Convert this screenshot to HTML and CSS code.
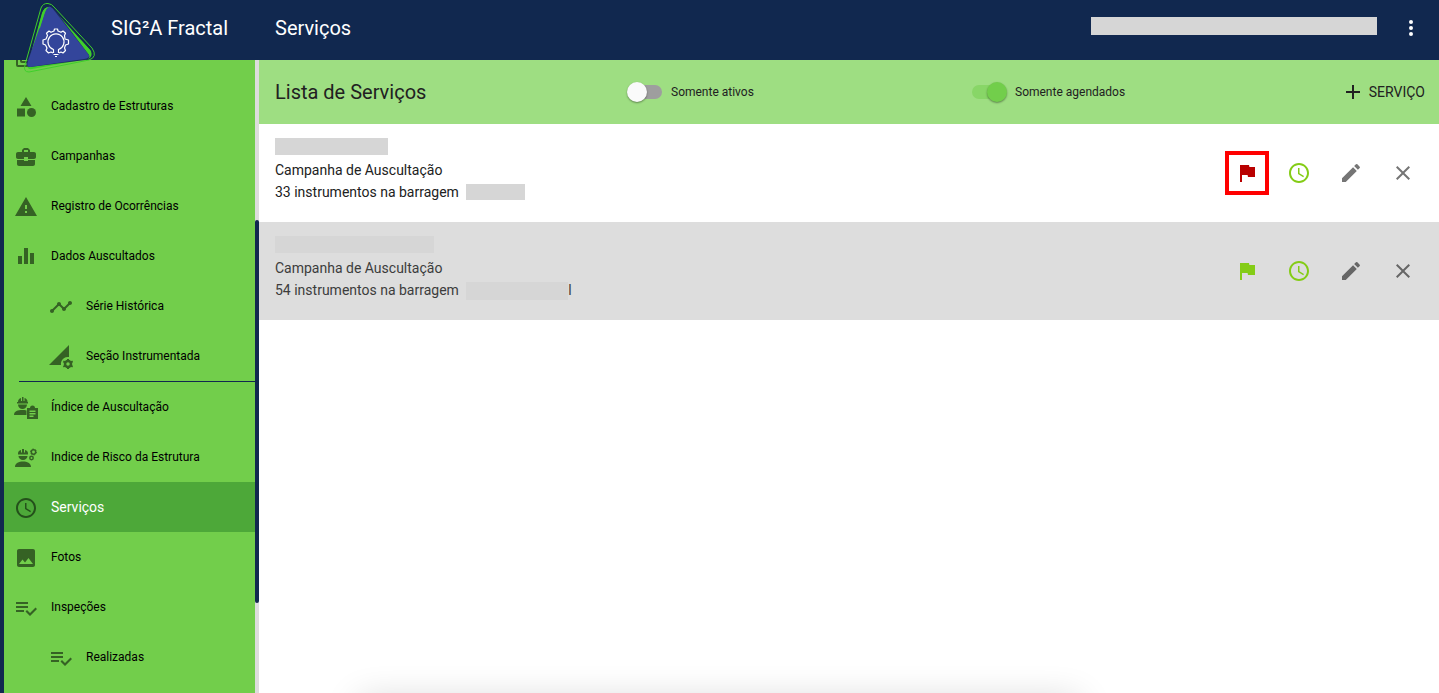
FILE: index.html
```
<!doctype html>
<html lang="pt-BR">
  <head>
    <meta charset="utf-8">
    <title>SIG²A Fractal - Serviços</title>
    <meta name="viewport" content="width=device-width">
    <link rel="stylesheet" href="styles.css">
  </head>
  <body>

    <svg class="sprite" aria-hidden="true">
      <symbol id="flag" viewBox="0 0 24 24"><path d="M14.400 6L14 4H5v17h2v-7h5.600l.4 2h7V6z"/></symbol>
      <symbol id="clock" viewBox="0 0 24 24"><path d="M11.990 2C6.470 2 2 6.480 2 12s4.470 10 9.990 10C17.520 22 22 17.520 22 12S17.520 2 11.990 2zM12 20c-4.420 0-8-3.580-8-8s3.580-8 8-8 8 3.580 8 8-3.580 8-8 8zm.5-13H11v6l5.250 3.150.75-1.230-4.500-2.670z"/></symbol>
      <symbol id="pencil" viewBox="0 0 24 24"><path d="M3 17.250V21h3.750L17.810 9.940l-3.750-3.750L3 17.250zM20.710 7.040c.39-.39.39-1.020 0-1.410l-2.340-2.340a1 1 0 0 0-1.410 0l-1.830 1.830 3.750 3.750 1.830-1.830z"/></symbol>
      <symbol id="close" viewBox="0 0 24 24"><path d="M19 6.410L17.590 5 12 10.590 6.410 5 5 6.410 10.590 12 5 17.590 6.410 19 12 13.410 17.590 19 19 17.590 13.410 12z"/></symbol>
      <symbol id="playlist" viewBox="0 0 24 24"><path d="M14 10H2v2h12v-2zm0-4H2v2h12V6zM2 16h8v-2H2v2zm19.500-4.500L23 13l-6.990 7-4.510-4.500L13 14l3.010 3 5.490-5.500z"/></symbol>
    </svg>

    <header class="topbar">
      <a href="#" class="logo" aria-label="SIG²A">
        <svg viewBox="0 0 76 76">
          <path d="M21 8Q23 3 28 3.500Q32 4 34 7L72 48Q78 57 69 60L9 72Q3 72 5 65Z" fill="none" stroke="#3fce2b"/>
          <path d="M22 13Q24 7 29 7L33 9L71 51Q73 57 68 59L12 69Q6 70 8 64Z" fill="#3fce2b"/>
          <path d="M27 10Q30 6 35 10L69 55Q71 59 65 60L10 67Q5 67 7 61L25 20Z" fill="#1b2b61"/>
          <path d="M26 9Q29 4 33 9L69 55Q70 58 64 59L10 67Q6 67 8 61Z" fill="#33459b"/>
          <path d="M22 14Q24 7 29 7Q26 8 24 15L20 28L18 29ZM60 39L70 50Q72 54 70 55Z" fill="#3fce2b"/>
          <g fill="none" stroke="#fff" stroke-width="1.200" stroke-linejoin="round">
            <path d="M33 53l-2-1-2.500 1-2.500-2.500 1-2.500-1.500-3-2.500-1v-4l3-1 1.500-3.500-1-2.300 2.500-2.200 2 1.300 3-1.300.5-2h3l.5 2 3 1.300 2-1.300 2.500 2.200-1 2.300L45 39l3.500 1v4l-3 1-1 3 1 2.500-2.500 2.500-2-1-2 1"/>
            <path d="M33.500 53v-3.500a8 8 0 1 1 5 0V53M33.500 54.500h5M35 56.500h2"/>
          </g>
        </svg>
      </a>
      <span class="brand">SIG²A Fractal</span>
      <h1 class="page-title">Serviços</h1>
      <span class="user"></span>
      <button class="more" aria-label="Mais opções">
        <svg class="icon" viewBox="0 0 24 24"><path d="M12 8a2 2 0 1 0 0-4 2 2 0 0 0 0 4zm0 2a2 2 0 1 0 0 4 2 2 0 0 0 0-4zm0 6a2 2 0 1 0 0 4 2 2 0 0 0 0-4z"/></svg>
      </button>
    </header>

    <div class="layout">
      <nav class="sidebar">
        <div class="menu">
          <a href="#" class="item" aria-label="Painel">
            <svg class="icon" viewBox="0 0 24 24"><path d="M4 6H2v14a2 2 0 0 0 2 2h14v-2H4zM20 2H8a2 2 0 0 0-2 2v12a2 2 0 0 0 2 2h12a2 2 0 0 0 2-2V4a2 2 0 0 0-2-2zm0 14H8V4h12z"/></svg>
          </a>
          <a href="#" class="item">
            <svg class="icon" viewBox="0 0 24 24"><path d="M12 2l-5.500 9h11zM3 13.500h8v8H3z"/><circle cx="17.500" cy="17.500" r="4.500"/></svg>
            Cadastro de Estruturas
          </a>
          <a href="#" class="item">
            <svg class="icon" viewBox="0 0 24 24"><path d="M10 16v-1H3.010L3 19c0 1.110.89 2 2 2h14c1.110 0 2-.89 2-2v-4h-7v1h-4zm10-9h-4.010V5l-2-2h-4l-2 2v2H4c-1.100 0-2 .9-2 2v3c0 1.110.89 2 2 2h6v-2h4v2h6c1.100 0 2-.9 2-2V9c0-1.100-.9-2-2-2zm-6 0h-4V5h4v2z"/></svg>
            Campanhas
          </a>
          <a href="#" class="item">
            <svg class="icon" viewBox="0 0 24 24"><path d="M1 21h22L12 2 1 21zm12-3h-2v-2h2v2zm0-4h-2v-4h2v4z"/></svg>
            Registro de Ocorrências
          </a>
          <a href="#" class="item">
            <svg class="icon" viewBox="0 0 24 24"><path d="M4 11h4v8H4zM10 3h4v16h-4zM16 8h4v11h-4z"/></svg>
            Dados Auscultados
          </a>
          <a href="#" class="item sub">
            <svg class="icon" viewBox="0 0 24 24"><path d="M23 8c0 1.100-.9 2-2 2-.18 0-.35-.02-.51-.07l-3.560 3.550c.05.16.07.34.07.52 0 1.100-.9 2-2 2s-2-.9-2-2c0-.18.02-.36.07-.52l-2.550-2.550c-.16.05-.34.07-.52.07s-.36-.02-.52-.07l-4.550 4.560c.05.16.07.33.07.51 0 1.100-.9 2-2 2s-2-.9-2-2 .9-2 2-2c.18 0 .35.02.51.07l4.560-4.550C8.020 9.360 8 9.180 8 9c0-1.100.9-2 2-2s2 .9 2 2c0 .18-.02.36-.07.52l2.550 2.550c.16-.05.34-.07.52-.07s.36.02.52.07l3.550-3.560C19.020 8.350 19 8.180 19 8c0-1.100.9-2 2-2s2 .9 2 2z"/></svg>
            Série Histórica
          </a>
          <a href="#" class="item sub">
            <svg class="icon" viewBox="0 0 24 24"><path d="M0 20L20 0v12a7 7 0 0 0-8 8z"/><circle cx="19" cy="19" r="3" fill="none" stroke="currentColor" stroke-width="2.500"/><path d="M18 14h2v2h-2zM18 22h2v2h-2zM13.800 17.200l1-1.700 1.700 1-1 1.700zM21.500 21.600l1-1.700 1.700 1-1 1.700zM13.800 20.900l1.700-1 1 1.700-1.700 1zM21.500 16.500l1.700-1 1 1.700-1.700 1z"/></svg>
            Seção Instrumentada
          </a>
          <hr class="divider">
          <a href="#" class="item">
            <svg class="icon" viewBox="0 0 24 24"><path d="M3 6h1c0-2 1-3.500 3-4v3h1V1h1.500v4h1V2c2 .5 3 2 3 4h.5v1.500H3zM4 8.500h9a4.500 4.500 0 0 1-9 0zM0 19c0-4 4-5 8-5 2 0 3 0 4.500.5V19z"/><path fill-rule="evenodd" d="M13 12h3a2.500 2.500 0 0 1 5 0h3v11H13V12zm2.500 2.500V16h6v-1.500zm0 2.500v1.500h6V17zm0 2.500V21h4v-1.500z"/></svg>
            Índice de Auscultação
          </a>
          <a href="#" class="item">
            <svg class="icon" viewBox="0 0 24 24"><path d="M4 7.500c0-2 1-3 3-3.500v2.500h1V3h2v3.500h1V4c2 .5 3 1.500 3 3.500v1H4zM4.500 10h9a4.500 4 0 0 1-9 0zM1 21c0-4 4-5.500 8-5.500s8 1.500 8 5.500z"/><g fill="none" stroke="currentColor"><circle cx="19.500" cy="6" r="2.200" stroke-width="1.500"/><circle cx="19.500" cy="6" r="3" stroke-dasharray="1.300 1.840"/><circle cx="17.500" cy="12" r="1.700" stroke-width="1.500"/></g></svg>
            Indice de Risco da Estrutura
          </a>
          <a href="#" class="item active" aria-current="page">
            <svg class="icon"><use href="#clock"/></svg>
            Serviços
          </a>
          <a href="#" class="item">
            <svg class="icon" viewBox="0 0 24 24"><path d="M21 19V5c0-1.100-.9-2-2-2H5c-1.100 0-2 .9-2 2v14c0 1.100.9 2 2 2h14c1.100 0 2-.9 2-2zM8.500 13.500l2.500 3.010L14.500 12l4.500 6H5l3.500-4.500z"/></svg>
            Fotos
          </a>
          <a href="#" class="item">
            <svg class="icon"><use href="#playlist"/></svg>
            Inspeções
          </a>
          <a href="#" class="item sub">
            <svg class="icon"><use href="#playlist"/></svg>
            Realizadas
          </a>
        </div>
        <div class="scrollbar"><div class="thumb"></div></div>
      </nav>

      <main class="content">
        <div class="toolbar">
          <h2 class="list-title">Lista de Serviços</h2>
          <label class="switch">
            <input type="checkbox">
            Somente ativos
          </label>
          <label class="switch">
            <input type="checkbox" checked>
            Somente agendados
          </label>
          <button class="add">
            <svg class="icon" viewBox="0 0 24 24"><path d="M19 13h-6v6h-2v-6H5v-2h6V5h2v6h6z"/></svg>
            SERVIÇO
          </button>
        </div>

        <ul class="services">
          <li class="service">
            <div class="info">
              <span class="mask mask-name"></span>
              <p>Campanha de Auscultação</p>
              <p>33 instrumentos na barragem <span class="mask mask-dam"></span></p>
            </div>
            <div class="actions">
              <button class="late" aria-label="Situação"><svg class="icon"><use href="#flag"/></svg></button>
              <button class="green" aria-label="Agenda"><svg class="icon"><use href="#clock"/></svg></button>
              <button aria-label="Editar"><svg class="icon"><use href="#pencil"/></svg></button>
              <button aria-label="Excluir"><svg class="icon"><use href="#close"/></svg></button>
            </div>
          </li>
          <li class="service selected">
            <div class="info">
              <span class="mask mask-name wide"></span>
              <p>Campanha de Auscultação</p>
              <p>54 instrumentos na barragem <span class="mask mask-dam wide"></span>l</p>
            </div>
            <div class="actions">
              <button class="green" aria-label="Situação"><svg class="icon"><use href="#flag"/></svg></button>
              <button class="green" aria-label="Agenda"><svg class="icon"><use href="#clock"/></svg></button>
              <button aria-label="Editar"><svg class="icon"><use href="#pencil"/></svg></button>
              <button aria-label="Excluir"><svg class="icon"><use href="#close"/></svg></button>
            </div>
          </li>
        </ul>
        <div class="snackbar"></div>
      </main>
    </div>

  </body>
</html>
```
FILE: styles.css
```
* {
  box-sizing: border-box;
}
html, body {
  height: 100%;
}
body {
  margin: 0;
  display: flex;
  flex-direction: column;
  overflow: hidden;
  background: #fff;
  color: #212121;
  font-family: Roboto, sans-serif;
  font-size: 14px;
}
h1, h2, p, ul {
  margin: 0;
  padding: 0;
  font-weight: 400;
}
button {
  padding: 0;
  border: 0;
  background: none;
  color: inherit;
  font: inherit;
  cursor: pointer;
}
.sprite {
  display: none;
}
.icon {
  display: block;
  flex: none;
  width: 24px;
  height: 24px;
  fill: currentColor;
}

/* top bar */
.topbar {
  position: relative;
  z-index: 1;
  display: flex;
  flex: none;
  align-items: center;
  height: 60px;
  padding: 0 16px 4px 111px;
  background: #11284f;
  color: #fff;
}
/* the logo hangs over the menu */
.logo {
  position: absolute;
  top: 0;
  left: 20px;
}
.logo svg {
  display: block;
  width: 76px;
  height: 76px;
}
.brand,
.page-title {
  font-size: 20px;
  line-height: 28px;
}
.brand {
  width: 164px;
}
.user {
  width: 286px;
  height: 18px;
  margin: 0 22px 4px auto;
  background: #d6d6d6;
}

.layout {
  display: flex;
  flex: 1;
  min-height: 0;
}

/* side menu */
.sidebar {
  display: flex;
  flex: none;
  width: 259px;
  padding-left: 4px;
  background: #11284f;
}
.menu {
  display: flex;
  flex: 1;
  flex-direction: column;
  overflow: hidden;
  background: #72ce4b;
}
.item {
  display: flex;
  flex: none;
  align-items: center;
  gap: 13px;
  height: 50px;
  padding-left: 10px;
  color: #000;
  font-size: 12px;
  text-decoration: none;
}
.item .icon {
  margin-top: 2px;
  color: #356224;
}
.item:first-child {
  height: 21px;
  align-items: flex-end;
  padding-bottom: 12px;
}
.item.sub {
  padding-left: 45px;
}
.item.active {
  background: #4da839;
  color: #fff;
  font-size: 14px;
}
.item.active .icon {
  color: #24501b;
}
.divider {
  flex: none;
  width: 100%;
  height: 1px;
  margin: 0 0 0 15px;
  border: 0;
  background: #11284f;
}
.scrollbar {
  width: 4px;
  padding-top: 160px;
  background: #ddd;
}
.thumb {
  height: 383px;
  border-radius: 2px;
  background: #11284f;
}

/* list */
.content {
  position: relative;
  flex: 1;
  min-width: 0;
  overflow: hidden;
}
.toolbar {
  display: grid;
  grid-template-columns: 352px 344px 1fr auto;
  align-items: center;
  height: 64px;
  padding: 0 14px 0 16px;
  background: #9ede82;
}
.list-title {
  font-size: 20px;
}
.switch {
  display: flex;
  align-items: center;
  gap: 9px;
  font-size: 12px;
}
.switch input {
  appearance: none;
  display: flex;
  align-items: center;
  width: 34px;
  height: 14px;
  margin: 0 0 0 1px;
  border-radius: 7px;
  background: #9e9e9e;
}
.switch input::before {
  content: "";
  width: 20px;
  height: 20px;
  flex: none;
  margin-left: -1px;
  border-radius: 50%;
  background: #fafafa;
  box-shadow: 0 1px 2px rgba(0, 0, 0, 0.4);
}
.switch input:checked {
  background: #88d667;
}
.switch input:checked::before {
  margin-left: 15px;
  background: #72ce4b;
}
.add {
  display: flex;
  align-items: center;
  gap: 4px;
}
.services {
  list-style: none;
}
.service {
  display: flex;
  justify-content: space-between;
  height: 98px;
  padding: 14px 14px 14px 16px;
  line-height: 22px;
}
.service.selected {
  background: #ddd;
  color: #3c3c3c;
}
.mask {
  display: inline-block;
  background: #d6d6d6;
}
.mask-name {
  display: block;
  width: 113px;
  height: 17px;
  margin-bottom: 4px;
}
.mask-name.wide {
  width: 159px;
}
.mask-dam {
  width: 59px;
  height: 16px;
  margin-left: 4px;
  vertical-align: -3px;
}
.mask-dam.wide {
  width: 102px;
  height: 18px;
  vertical-align: -5px;
}
.actions {
  display: flex;
  align-items: center;
  gap: 8px;
  color: #757575;
}
.actions button {
  display: flex;
  align-items: center;
  justify-content: center;
  width: 44px;
  height: 44px;
}
.selected .actions {
  color: #666;
}
.actions .green {
  color: #84cc16;
}
.actions .late {
  border: 4px solid #f00;
  color: #b90000;
}
/* closed snackbar, only its shadow shows at the bottom */
.snackbar {
  position: absolute;
  right: 31%;
  bottom: -24px;
  left: 9%;
  height: 10px;
  box-shadow: 0 0 36px 6px rgba(0, 0, 0, 0.2);
}
```
